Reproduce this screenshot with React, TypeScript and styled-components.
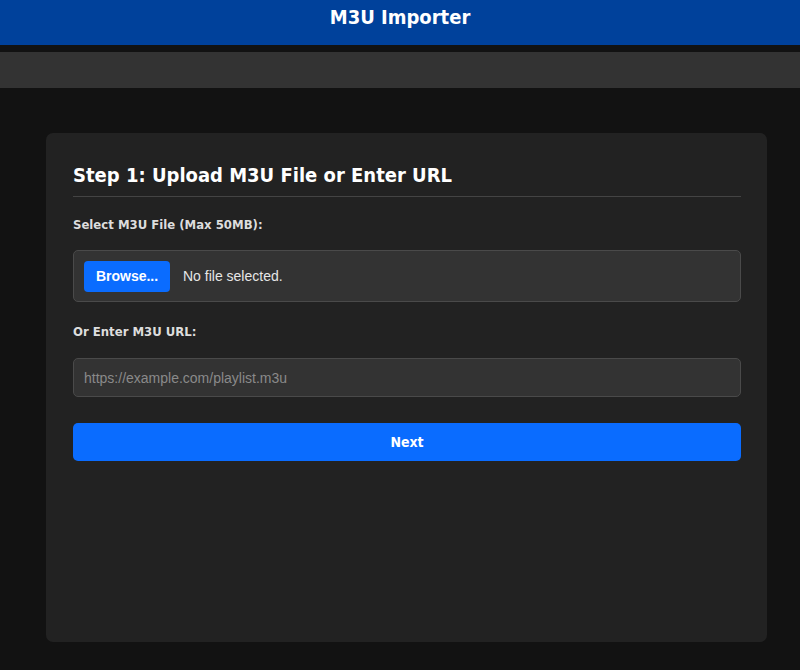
import React from "react";
import styled, { createGlobalStyle } from "styled-components";

const Global = createGlobalStyle`
  html, body { margin: 0; padding: 0; background: #121212; }
  body { font-family: "DejaVu Sans Condensed", "DejaVu Sans", Tahoma, sans-serif; color: #fff; }
  * { box-sizing: border-box; }
`;

const Page = styled.div`
  min-height: 670px;
  background: #121212;
  display: flex;
  flex-direction: column;
`;

const Header = styled.header`
  height: 45px;
  background: #00419b;
  display: flex;
  align-items: flex-start;
  justify-content: center;
  padding-top: 5px;
`;

const Title = styled.h1`
  margin: 0;
  font-size: 20px;
  line-height: 24px;
  font-weight: bold;
  color: #fff;
`;

const SubBar = styled.div`
  margin-top: 7px;
  height: 36px;
  background: #333333;
`;

const Main = styled.main`
  padding: 45px 33px 28px 46px;
`;

const Card = styled.section`
  background: #222222;
  border-radius: 7px;
  height: 509px;
  padding: 30px 26px 20px 27px;
  display: flex;
  flex-direction: column;
`;

const StepHeading = styled.h2`
  margin: 0;
  font-size: 20px;
  font-weight: bold;
  color: #fff;
  line-height: 24px;
  padding-bottom: 9px;
  border-bottom: 1px solid #444;
`;

const Label = styled.label<{ $top: number }>`
  display: block;
  margin-top: ${(p) => p.$top}px;
  font-size: 13px;
  font-weight: bold;
  color: #dddddd;
  line-height: 16px;
`;

const FileBox = styled.div`
  margin-top: 17px;
  height: 52px;
  background: #333333;
  border: 1px solid #4a4a4a;
  border-radius: 5px;
  display: flex;
  align-items: center;
  padding: 0 10px;
  gap: 13px;
`;

const BrowseButton = styled.button`
  height: 31px;
  width: 86px;
  border: none;
  border-radius: 4px;
  background: #0a6cff;
  color: #fff;
  font-family: "Liberation Sans", Arial, sans-serif;
  font-weight: bold;
  font-size: 14px;
  padding: 0;
`;

const FileStatus = styled.span`
  font-family: "Liberation Sans", Arial, sans-serif;
  font-size: 14px;
  color: #e6e6e6;
`;

const UrlInput = styled.input`
  margin-top: 18px;
  height: 39px;
  width: 100%;
  background: #333333;
  border: 1px solid #4a4a4a;
  border-radius: 5px;
  padding: 0 10px;
  font-family: "Liberation Sans", Arial, sans-serif;
  font-size: 14px;
  color: #fff;
  outline: none;
  &::placeholder { color: #8a8a8a; }
`;

const NextButton = styled.button`
  margin-top: 26px;
  height: 38px;
  width: 100%;
  border: none;
  border-radius: 5px;
  background: #0a6cff;
  color: #fff;
  font-family: "DejaVu Sans Condensed", "DejaVu Sans", Tahoma, sans-serif;
  font-weight: bold;
  font-size: 14px;
`;

export default function App() {
  return (
    <>
      <Global />
      <Page>
        <Header>
          <Title>M3U Importer</Title>
        </Header>
        <SubBar />
        <Main>
          <Card>
            <StepHeading>Step 1: Upload M3U File or Enter URL</StepHeading>
            <Label $top={20}>Select M3U File (Max 50MB):</Label>
            <FileBox>
              <BrowseButton>Browse...</BrowseButton>
              <FileStatus>No file selected.</FileStatus>
            </FileBox>
            <Label $top={22}>Or Enter M3U URL:</Label>
            <UrlInput placeholder="https://example.com/playlist.m3u" />
            <NextButton>Next</NextButton>
          </Card>
        </Main>
      </Page>
    </>
  );
}
